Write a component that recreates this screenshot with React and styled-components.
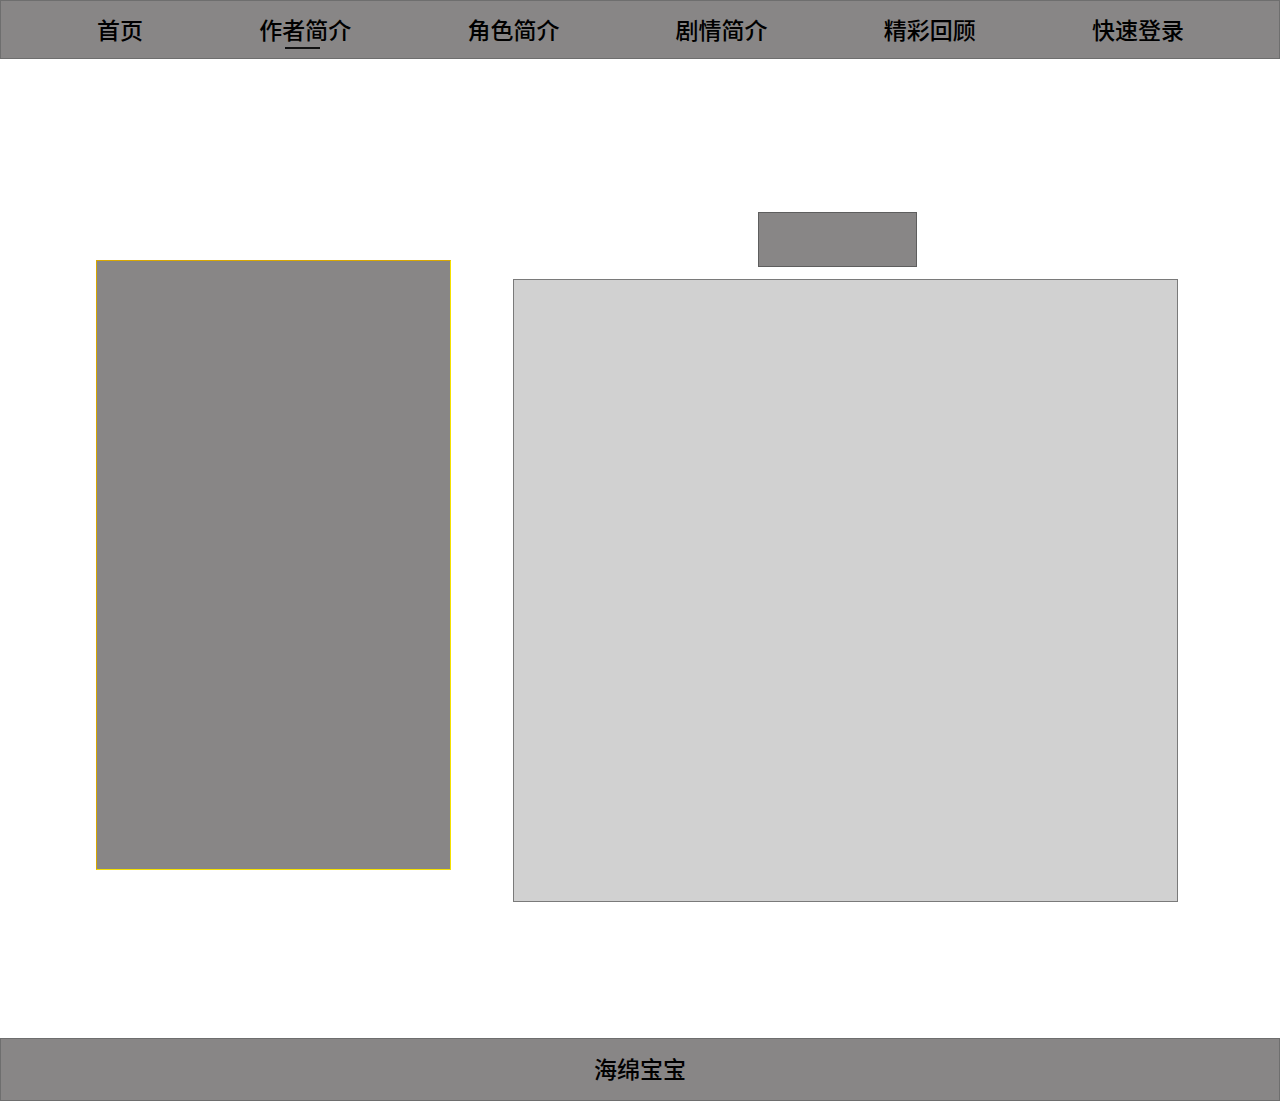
import styled, { createGlobalStyle } from "styled-components";

const GlobalStyle = createGlobalStyle`
  * {
    box-sizing: border-box;
  }
  body {
    margin: 0;
    background: #ffffff;
    font-family: "Noto Sans CJK SC", "Noto Sans", sans-serif;
  }
`;

const Page = styled.div`
  width: 1280px;
  display: flex;
  flex-direction: column;
`;

const Header = styled.header`
  height: 59px;
  background-color: #888686;
  border: 1px solid #6e6e6e;
  display: flex;
  align-items: center;
  justify-content: space-between;
  padding: 0 95px 0 96px;
`;

const NavItem = styled.a`
  position: relative;
  font-size: 23px;
  font-weight: 500;
  line-height: 1;
  color: #000000;
  text-decoration: none;
  cursor: pointer;

  &::after {
    content: "";
    display: ${(p) => (p.$active ? "block" : "none")};
    position: absolute;
    left: 50%;
    bottom: -8px;
    width: 35px;
    height: 2px;
    margin-left: -20px;
    background-color: #111111;
  }
`;

const Main = styled.main`
  height: 979px;
  display: flex;
  align-items: flex-start;
  gap: 62px;
  padding: 153px 0 0 96px;
`;

const Poster = styled.div`
  width: 355px;
  height: 610px;
  margin-top: 48px;
  background-color: #888686;
  border: 1px solid;
  border-color: #d9a800 #f5e000 #f5e000 #d9a800;
`;

const RightColumn = styled.section`
  width: 665px;
  display: flex;
  flex-direction: column;
`;

const Title = styled.div`
  width: 159px;
  height: 55px;
  margin: 0 0 12px 245px;
  background-color: #888686;
  border: 1px solid #5e5e5e;
`;

const Content = styled.div`
  width: 665px;
  height: 623px;
  background-color: #d1d1d1;
  border: 1px solid #7a7a7a;
`;

const Footer = styled.footer`
  height: 63px;
  background-color: #888686;
  border: 1px solid #6e6e6e;
  display: flex;
  align-items: center;
  justify-content: center;
  padding-bottom: 3px;
  font-size: 23px;
  font-weight: 500;
  color: #000000;
`;

const navItems = ["首页", "作者简介", "角色简介", "剧情简介", "精彩回顾", "快速登录"];

const App = () => {
  return (
    <Page>
      <GlobalStyle />
      <Header>
        {navItems.map((item) => (
          <NavItem key={item} $active={item === "作者简介"}>
            {item}
          </NavItem>
        ))}
      </Header>
      <Main>
        <Poster />
        <RightColumn>
          <Title />
          <Content />
        </RightColumn>
      </Main>
      <Footer>海绵宝宝</Footer>
    </Page>
  );
};

export default App;
